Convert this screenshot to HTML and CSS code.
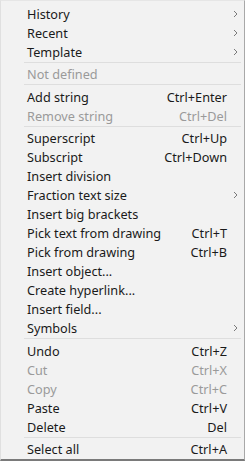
FILE: index.html
```html
<!DOCTYPE html>
<html>
<head>
<meta charset="utf-8">
<link rel="stylesheet" href="styles.css">
</head>
<body>
<div class="menu">
  <div class="item"><span class="label">History</span><span class="key"></span><span class="sub"><svg width="5" height="8" viewBox="0 0 5 8"><path d="M1 1 L4 4 L1 7" fill="none" stroke="#7a7a7a" stroke-width="1"/></svg></span></div>
  <div class="item"><span class="label">Recent</span><span class="key"></span><span class="sub"><svg width="5" height="8" viewBox="0 0 5 8"><path d="M1 1 L4 4 L1 7" fill="none" stroke="#7a7a7a" stroke-width="1"/></svg></span></div>
  <div class="item"><span class="label">Template</span><span class="key"></span><span class="sub"><svg width="5" height="8" viewBox="0 0 5 8"><path d="M1 1 L4 4 L1 7" fill="none" stroke="#7a7a7a" stroke-width="1"/></svg></span></div>
  <div class="sep"></div>
  <div class="item disabled"><span class="label">Not defined</span><span class="key"></span><span class="sub"></span></div>
  <div class="sep wide"></div>
  <div class="item"><span class="label">Add string</span><span class="key">Ctrl+Enter</span><span class="sub"></span></div>
  <div class="item disabled"><span class="label">Remove string</span><span class="key">Ctrl+Del</span><span class="sub"></span></div>
  <div class="sep"></div>
  <div class="item"><span class="label">Superscript</span><span class="key">Ctrl+Up</span><span class="sub"></span></div>
  <div class="item"><span class="label">Subscript</span><span class="key">Ctrl+Down</span><span class="sub"></span></div>
  <div class="item"><span class="label">Insert division</span><span class="key"></span><span class="sub"></span></div>
  <div class="item"><span class="label">Fraction text size</span><span class="key"></span><span class="sub"><svg width="5" height="8" viewBox="0 0 5 8"><path d="M1 1 L4 4 L1 7" fill="none" stroke="#7a7a7a" stroke-width="1"/></svg></span></div>
  <div class="item"><span class="label">Insert big brackets</span><span class="key"></span><span class="sub"></span></div>
  <div class="item"><span class="label">Pick text from drawing</span><span class="key">Ctrl+T</span><span class="sub"></span></div>
  <div class="item"><span class="label">Pick from drawing</span><span class="key">Ctrl+B</span><span class="sub"></span></div>
  <div class="item"><span class="label">Insert object...</span><span class="key"></span><span class="sub"></span></div>
  <div class="item"><span class="label">Create hyperlink...</span><span class="key"></span><span class="sub"></span></div>
  <div class="item"><span class="label">Insert field...</span><span class="key"></span><span class="sub"></span></div>
  <div class="item"><span class="label">Symbols</span><span class="key"></span><span class="sub"><svg width="5" height="8" viewBox="0 0 5 8"><path d="M1 1 L4 4 L1 7" fill="none" stroke="#7a7a7a" stroke-width="1"/></svg></span></div>
  <div class="sep wide"></div>
  <div class="item"><span class="label">Undo</span><span class="key">Ctrl+Z</span><span class="sub"></span></div>
  <div class="item disabled"><span class="label">Cut</span><span class="key">Ctrl+X</span><span class="sub"></span></div>
  <div class="item disabled"><span class="label">Copy</span><span class="key">Ctrl+C</span><span class="sub"></span></div>
  <div class="item"><span class="label">Paste</span><span class="key">Ctrl+V</span><span class="sub"></span></div>
  <div class="item"><span class="label">Delete</span><span class="key">Del</span><span class="sub"></span></div>
  <div class="sep"></div>
  <div class="item"><span class="label">Select all</span><span class="key">Ctrl+A</span><span class="sub"></span></div>
</div>
</body>
</html>
```
FILE: styles.css
```css
html, body {
  margin: 0;
  padding: 0;
  background: #ffffff;
}
.menu {
  box-sizing: border-box;
  width: 245px;
  height: 461px;
  background: #f2f2f2;
  border-top: 1px solid #e6e6e6;
  border-left: 1px solid #e0e0e0;
  border-right: 1px solid #a8a8a8;
  border-bottom: 2px solid #7a7a7a;
  padding-top: 3px;
  font-family: "Noto Sans", "Open Sans", sans-serif;
  font-size: 12.7px;
  color: #1a1a1a;
  display: flex;
  flex-direction: column;
}
.item {
  height: 19px;
  display: flex;
  align-items: center;
  padding-left: 26px;
  white-space: nowrap;
}
.label {
  flex: 1;
}
.key {
  text-align: right;
}
.sub {
  width: 17px;
  flex: none;
  display: flex;
  justify-content: center;
  align-items: center;
}
.disabled {
  color: #9a9a9a;
}
.sep {
  height: 1px;
  margin: 1px 3px 1px 23px;
  background: #dedede;
  flex: none;
}
.sep.wide {
  margin-bottom: 2px;
}
```
